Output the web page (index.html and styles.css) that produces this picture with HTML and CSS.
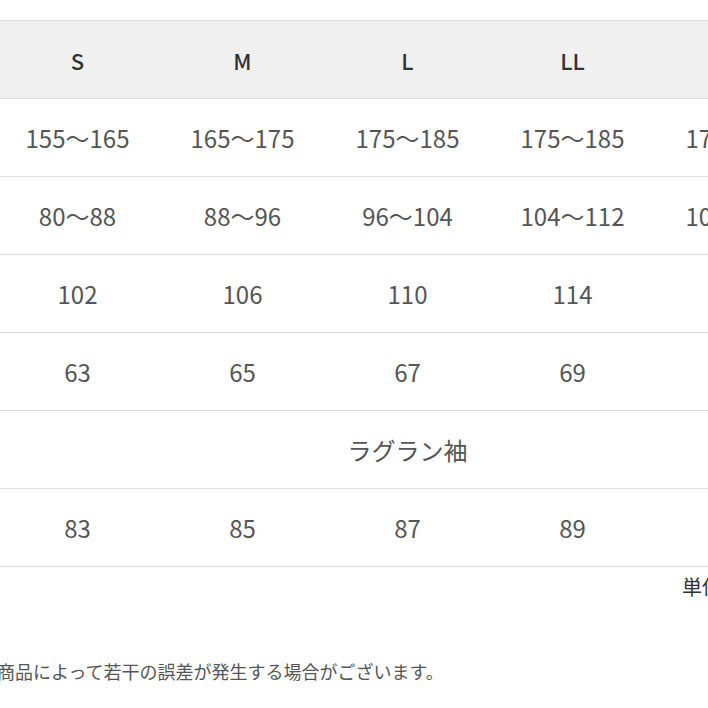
FILE: index.html
```html
<!DOCTYPE html>
<html lang="ja">
<head>
<meta charset="utf-8">
<link rel="stylesheet" href="styles.css">
</head>
<body>
<div class="page">
  <table class="chart">
    <colgroup>
      <col class="c"><col class="c"><col class="c"><col class="c"><col class="c">
    </colgroup>
    <thead>
      <tr class="head">
        <th>S</th><th>M</th><th>L</th><th>LL</th><th>3L</th>
      </tr>
    </thead>
    <tbody>
      <tr><td>155～165</td><td>165～175</td><td>175～185</td><td>175～185</td><td>175～190</td></tr>
      <tr><td>80～88</td><td>88～96</td><td>96～104</td><td>104～112</td><td>108～116</td></tr>
      <tr><td>102</td><td>106</td><td>110</td><td>114</td><td>118</td></tr>
      <tr><td>63</td><td>65</td><td>67</td><td>69</td><td>71</td></tr>
      <tr><td colspan="5">ラグラン袖</td></tr>
      <tr><td>83</td><td>85</td><td>87</td><td>89</td><td>91</td></tr>
    </tbody>
  </table>
  <p class="unit">単位：cm</p>
  <p class="note">商品によって若干の誤差が発生する場合がございます。</p>
</div>
</body>
</html>
```

FILE: styles.css
```css
html, body {
  margin: 0;
  padding: 0;
  background: #ffffff;
}

body {
  font-family: "Noto Sans CJK JP", "Noto Sans", sans-serif;
  overflow: hidden;
}

.page {
  margin-left: -5px;
  padding-top: 20px;
  width: 825px;
}

.chart {
  width: 825px;
  table-layout: fixed;
  border-collapse: separate;
  border-spacing: 0;
  border-top: 1px solid #dcdcdc;
}

.chart .c {
  width: 165px;
}

.chart th,
.chart td {
  height: 77px;
  padding: 0;
  text-align: center;
  vertical-align: middle;
  border-bottom: 1px solid #dcdcdc;
  white-space: nowrap;
}

.chart th {
  font-size: 22px;
  font-weight: 500;
  color: #333333;
}

.head {
  background: #f0f0f0;
}

.chart td {
  font-size: 24px;
  font-weight: 400;
  color: #555555;
}

.unit {
  margin: 8px 0 0 0;
  padding-left: 687px;
  font-size: 20px;
  line-height: 24px;
  color: #333333;
  white-space: nowrap;
}

.note {
  margin: 60px 0 0 0;
  padding-left: 2px;
  font-size: 18px;
  line-height: 24px;
  color: #555555;
  white-space: nowrap;
}
```
